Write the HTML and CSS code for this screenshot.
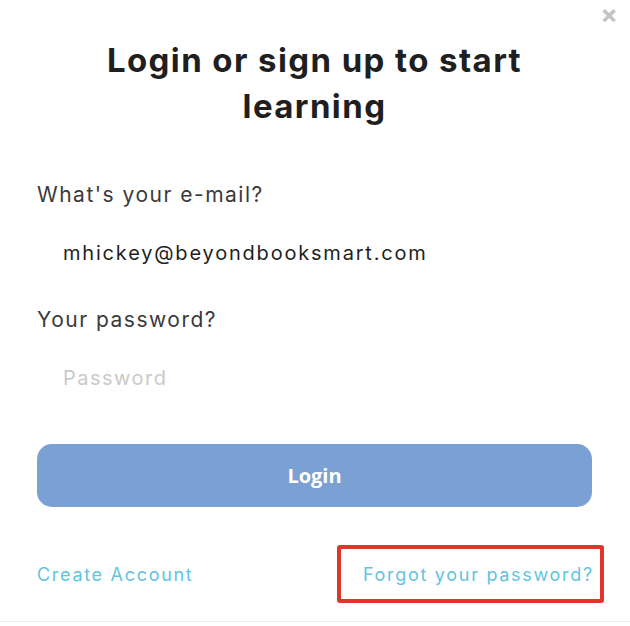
FILE: index.html
```html
<!DOCTYPE html>
<html lang="en">
<head>
    <meta charset="UTF-8">
    <meta name="viewport" content="width=device-width, initial-scale=1.0">
    <title>Login</title>
    <link rel="stylesheet" href="styles.css">
</head>
<body>
    <div class="modal">
        <span class="close">&times;</span>
        <h1>Login or sign up to start learning</h1>
        <form class="login-form">
            <label for="email">What's your e-mail?</label>
            <input type="text" id="email" value="mhickey@beyondbooksmart.com">
            <label for="password">Your password?</label>
            <input type="password" id="password" placeholder="Password">
            <button type="button" class="login-button">Login</button>
        </form>
        <div class="links">
            <a href="#" class="link">Create Account</a>
            <span class="highlight"><a href="#" class="link">Forgot your password?</a></span>
        </div>
    </div>
</body>
</html>
```

FILE: styles.css
```css
:root {
    --text-dark: #1f1f1f;
    --label-gray: #3a3a3a;
    --button-blue: #7ba0d4;
    --link-cyan: #62c4de;
    --mark-red: #e0352b;
}

* {
    margin: 0;
    padding: 0;
    box-sizing: border-box;
}

body {
    font-family: 'Inter', 'Open Sans', sans-serif;
    background: white;
    color: var(--text-dark);
}

.modal {
    position: relative;
    width: 630px;
    height: 622px;
    padding: 37px 38px 0 37px;
    border-bottom: 1px solid #ececec;
}

.close {
    position: absolute;
    top: 4px;
    right: 12px;
    font-size: 26px;
    line-height: 22px;
    color: #c4c4c4;
    font-weight: bold;
}

h1 {
    font-size: 33px;
    font-weight: 700;
    line-height: 46px;
    text-align: center;
    padding: 0 40px;
    letter-spacing: 1.4px;
}

.login-form {
    display: flex;
    flex-direction: column;
    margin-top: 52px;
}

label {
    font-size: 21px;
    line-height: 28px;
    color: var(--label-gray);
    letter-spacing: 1.5px;
}

input {
    height: 48px;
    border: none;
    outline: none;
    padding-left: 26px;
    font-family: inherit;
    font-size: 20px;
    letter-spacing: 1.8px;
    color: var(--text-dark);
    margin: 20px 0 29px;
}

input::placeholder {
    color: #cacaca;
    letter-spacing: 1.5px;
}

.login-button {
    height: 63px;
    margin-top: 13px;
    border: none;
    border-radius: 15px;
    background: var(--button-blue);
    color: white;
    font-family: 'Open Sans', sans-serif;
    font-size: 20px;
    font-weight: 700;
}

.links {
    display: flex;
    justify-content: space-between;
    align-items: center;
    margin-top: 38px;
    margin-right: -12px;
}

.link {
    color: var(--link-cyan);
    text-decoration: none;
    font-size: 18px;
    letter-spacing: 1.7px;
}

.highlight {
    display: flex;
    align-items: center;
    width: 267px;
    height: 58px;
    padding-left: 22px;
    border: 4px solid var(--mark-red);
    border-radius: 3px;
}
```
